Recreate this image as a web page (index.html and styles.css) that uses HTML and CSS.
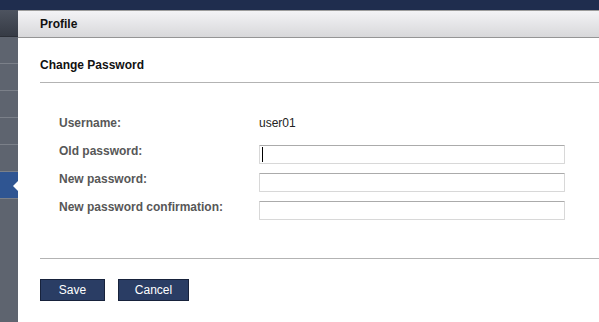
FILE: index.html
```html
<!DOCTYPE html>
<html lang="en">
<head>
    <meta charset="UTF-8">
    <meta name="viewport" content="width=device-width, initial-scale=1.0">
    <title>Profile</title>
    <link rel="stylesheet" href="styles.css">
</head>
<body>
    <div class="topbar"></div>
    <div class="layout">
        <!-- Collapsed navigation -->
        <nav class="sidebar">
            <div class="side-head"></div>
            <div class="side-item"></div>
            <div class="side-item"></div>
            <div class="side-item"></div>
            <div class="side-item"></div>
            <div class="side-item"></div>
            <div class="side-item active"></div>
        </nav>
        <div class="content">
            <div class="page-head">Profile</div>
            <div class="panel">
                <h2 class="panel-title">Change Password</h2>
                <form class="pw-form" action="#" method="post">
                    <div class="row">
                        <span class="label">Username:</span>
                        <span class="value">user01</span>
                    </div>
                    <div class="row">
                        <label class="label" for="oldPassword">Old password:</label>
                        <span class="field">
                            <input type="password" id="oldPassword" name="oldPassword">
                            <span class="caret"></span>
                        </span>
                    </div>
                    <div class="row">
                        <label class="label" for="newPassword">New password:</label>
                        <span class="field"><input type="password" id="newPassword" name="newPassword"></span>
                    </div>
                    <div class="row">
                        <label class="label" for="confirmPassword">New password confirmation:</label>
                        <span class="field"><input type="password" id="confirmPassword" name="confirmPassword"></span>
                    </div>
                </form>
                <div class="divider"></div>
                <div class="actions">
                    <button type="submit" class="btn btn-save">Save</button>
                    <button type="button" class="btn btn-cancel">Cancel</button>
                </div>
            </div>
        </div>
    </div>
</body>
</html>
```

FILE: styles.css
```css
 body {
     margin: 0;
     padding: 0;
     font-family: "Liberation Sans", Arial, sans-serif;
     font-size: 12px;
     background-color: #ffffff;
     height: 322px;
     overflow: hidden;
 }
 .topbar {
     height: 10px;
     background-color: #1f2d4e;
 }
 .layout {
     display: flex;
     height: 312px;
 }
 /* Sidebar */
 .sidebar {
     width: 18px;
     flex-shrink: 0;
     background-color: #5e646f;
 }
 .side-head {
     height: 26px;
     background: linear-gradient(#4d535f, #363b45);
     border-bottom: 1px solid #2b2f37;
 }
 .side-item {
     height: 26px;
     border-bottom: 1px solid #7b8089;
 }
 .side-item.active {
     position: relative;
     background-color: #2f5592;
 }
 .side-item.active:after {
     content: "";
     position: absolute;
     right: 0;
     top: 9px;
     border-top: 5px solid transparent;
     border-bottom: 5px solid transparent;
     border-right: 5px solid #ffffff;
 }
 /* Main area */
 .content {
     flex: 1;
 }
 .page-head {
     height: 26px;
     line-height: 26px;
     padding-left: 22px;
     border-top: 1px solid #9c9c9c;
     border-bottom: 1px solid #959595;
     background: linear-gradient(#f3f3f6, #d8d8da);
     font-weight: bold;
     color: #111111;
 }
 .panel {
     padding-left: 22px;
 }
 .panel-title {
     margin: 20px 0 0 0;
     padding-bottom: 9px;
     font-size: 12px;
     line-height: 15px;
     color: #111111;
     border-bottom: 1px solid #b3b3b3;
 }
 .pw-form {
     margin: 30px 0 0 19px;
 }
 .row {
     display: flex;
     height: 28px;
 }
 .label {
     width: 200px;
     padding-top: 3px;
     line-height: 14px;
     font-weight: bold;
     color: #575757;
 }
 .value {
     padding-top: 3px;
     line-height: 14px;
     color: #222222;
 }
 .field {
     position: relative;
     margin-top: 4px;
 }
 .field input {
     display: block;
     box-sizing: border-box;
     width: 306px;
     height: 19px;
     margin: 0;
     padding: 0 3px;
     border: 1px solid #d8d8d8;
     border-top-color: #ababab;
     border-radius: 1px;
     background-color: #ffffff;
     outline: none;
 }
 .caret {
     position: absolute;
     left: 3px;
     top: 2px;
     width: 1px;
     height: 15px;
     background-color: #000000;
 }
 .divider {
     margin-top: 33px;
     border-top: 1px solid #b3b3b3;
 }
 .actions {
     display: flex;
     gap: 13px;
     margin-top: 20px;
 }
 .btn {
     height: 22px;
     padding: 0;
     font-family: "Liberation Sans", Arial, sans-serif;
     font-size: 12px;
     color: #ffffff;
     background-color: #2a3d64;
     border: 1px solid #17223b;
     cursor: pointer;
 }
 .btn-save {
     width: 65px;
 }
 .btn-cancel {
     width: 71px;
 }
 .btn:hover {
     background-color: #233457;
 }
```
